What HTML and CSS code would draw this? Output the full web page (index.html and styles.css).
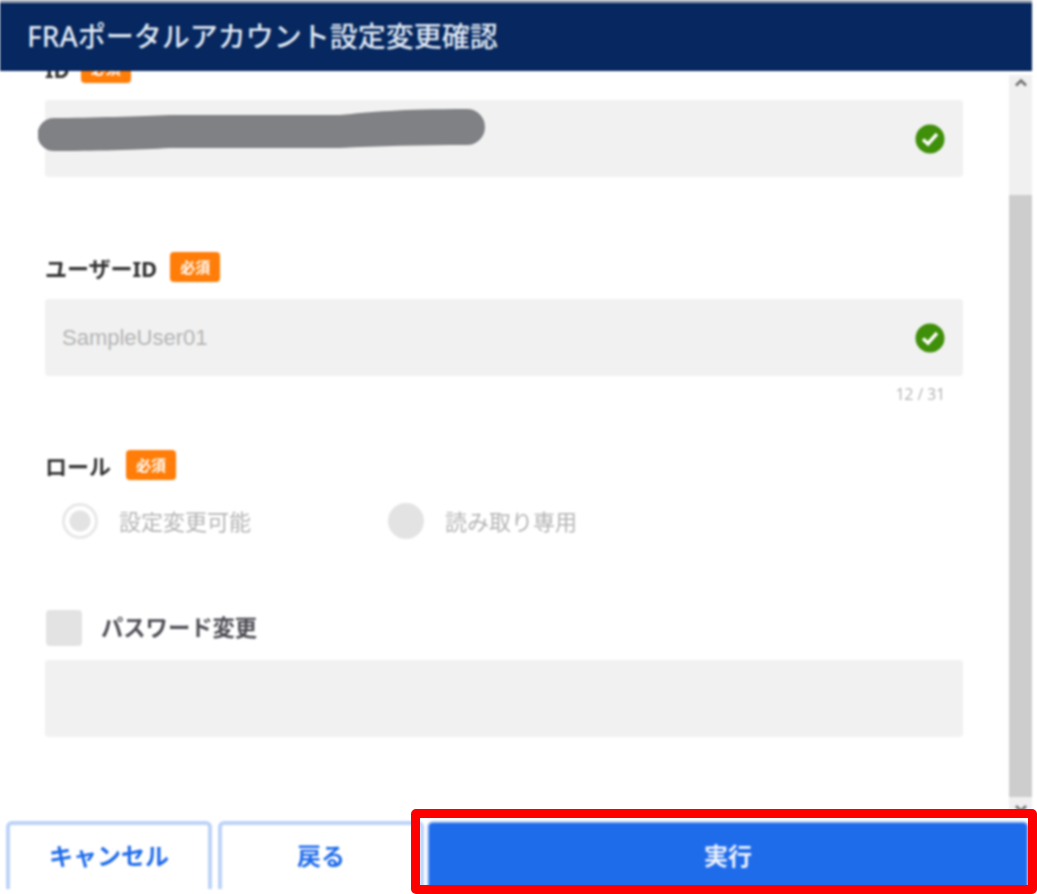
FILE: index.html
```html
<!DOCTYPE html>
<html lang="ja">

<head>
    <meta charset="UTF-8">
    <title>FRAポータルアカウント設定変更確認</title>
    <link rel="stylesheet" href="styles.css">
</head>

<body>
    <div class="dialog">
        <div class="strip"></div>
        <div class="title">FRAポータルアカウント設定変更確認</div>

        <div class="content">
            <div class="form">
                <div class="label-row first">
                    <span class="label">ID</span>
                    <span class="badge">必須</span>
                </div>
                <div class="field">
                    <svg class="redact" width="450" height="44" viewBox="38 108 450 44">
                        <path d="M54 118 C90 118 140 116 170 115 L340 115 C370 112 400 109 467 109 A18 18 0 0 1 467 145 C420 145 380 146 340 148 L170 148 C140 150 90 151 54 151 A16.5 16.5 0 0 1 54 118 Z" />
                    </svg>
                    <svg class="ok" width="30" height="30" viewBox="0 0 30 30">
                        <circle cx="15" cy="15" r="14.5" />
                        <path d="M8 15.5 L13 20 L22 10" />
                    </svg>
                </div>

                <div class="label-row second">
                    <span class="label">ユーザーID</span>
                    <span class="badge">必須</span>
                </div>
                <div class="field">
                    <span class="value">SampleUser01</span>
                    <svg class="ok" width="30" height="30" viewBox="0 0 30 30">
                        <circle cx="15" cy="15" r="14.5" />
                        <path d="M8 15.5 L13 20 L22 10" />
                    </svg>
                </div>
                <div class="counter">12 / 31</div>

                <div class="label-row third">
                    <span class="label">ロール</span>
                    <span class="badge">必須</span>
                </div>
                <div class="radios">
                    <div class="radio-item">
                        <span class="radio checked"></span>
                        <span class="radio-text">設定変更可能</span>
                    </div>
                    <div class="radio-item">
                        <span class="radio"></span>
                        <span class="radio-text">読み取り専用</span>
                    </div>
                </div>

                <div class="check-row">
                    <span class="checkbox"></span>
                    <span class="check-text">パスワード変更</span>
                </div>
                <div class="field pass"></div>
            </div>

            <div class="scrollbar">
                <svg class="arrow" width="14" height="9" viewBox="0 0 14 9">
                    <path d="M2 7.5 L7 2.5 L12 7.5" />
                </svg>
                <div class="thumb"></div>
                <svg class="arrow down" width="14" height="9" viewBox="0 0 14 9">
                    <path d="M2 2 L7 7 L12 2" />
                </svg>
            </div>
        </div>

        <div class="footer">
            <div class="btn cancel">キャンセル</div>
            <div class="btn back">戻る</div>
            <div class="btn run">実行</div>
        </div>
    </div>

    <div class="red-frame"></div>
</body>

</html>
```

FILE: styles.css
```css
html,
body {
    margin: 0;
    padding: 0;
    background: #fff;
}

body {
    width: 1037px;
    height: 894px;
    overflow: hidden;
    position: relative;
    font-family: "Noto Sans", "Noto Sans CJK JP", sans-serif;
}

.dialog {
    width: 1032px;
    filter: blur(.8px);
}

.strip {
    height: 3px;
    background: #98a2b0;
}

.title {
    height: 68px;
    padding-left: 27px;
    background: #06275f;
    color: #dfe7f3;
    font-size: 28px;
    font-weight: 500;
    line-height: 66px;
    white-space: nowrap;
}

.content {
    display: flex;
    height: 750px;
    overflow: hidden;
}

.form {
    width: 918px;
    padding-left: 45px;
}

.label-row {
    display: flex;
    align-items: center;
    gap: 14px;
    height: 30px;
}

.label-row.first {
    margin-top: -18px;
    gap: 11px;
}

.label-row.second {
    margin-top: 75px;
    gap: 13px;
}

.label-row.third {
    margin-top: 46px;
    gap: 15px;
}

.label {
    position: relative;
    top: 1px;
    color: #333;
    font-size: 22px;
    font-weight: 700;
    line-height: 30px;
}

.badge {
    width: 50px;
    height: 30px;
    border-radius: 4px;
    background: #ff7d08;
    color: #fff;
    font-size: 15px;
    font-weight: 700;
    line-height: 30px;
    text-align: center;
}

.field {
    display: flex;
    align-items: center;
    justify-content: space-between;
    position: relative;
    height: 77px;
    margin-top: 17px;
    padding: 0 18px 0 17px;
    border-radius: 4px;
    background: #f1f1f1;
}

.field.pass {
    margin-top: 14px;
}

.redact {
    position: absolute;
    left: -7px;
    top: 8px;
}

.redact path {
    fill: #808184;
}

.ok {
    margin-left: auto;
}

.ok circle {
    fill: #3f8f0a;
}

.ok path {
    fill: none;
    stroke: #fff;
    stroke-width: 3.4;
}

.value {
    color: #b4b4b4;
    font-family: "Liberation Sans", sans-serif;
    font-size: 22px;
}

.counter {
    height: 20px;
    margin-top: 8px;
    padding-right: 18px;
    color: #b4b4b4;
    font-size: 15.5px;
    line-height: 20px;
    text-align: right;
}

.radios {
    display: flex;
    height: 36px;
    margin-top: 23px;
    padding-left: 17px;
}

.radio-item {
    display: flex;
    align-items: center;
    gap: 21px;
    width: 326px;
    color: #b4b4b4;
    font-size: 22px;
}

.radio-text {
    margin-top: -3px;
}

.radio {
    width: 36px;
    height: 36px;
    border-radius: 50%;
    background: #e3e3e3;
    box-sizing: border-box;
}

.radio.checked {
    border: 3px solid #e8e8e8;
    background: radial-gradient(circle, #e3e3e3 0, #e3e3e3 10px, #fff 11px);
}

.check-row {
    display: flex;
    align-items: center;
    gap: 19px;
    height: 36px;
    margin: 71px 0 0 1px;
}

.checkbox {
    width: 36px;
    height: 36px;
    border-radius: 4px;
    background: #e3e3e3;
}

.check-text {
    margin-top: -3px;
    color: #4d4d55;
    font-size: 22.3px;
    font-weight: 700;
}

.scrollbar {
    display: flex;
    flex-direction: column;
    align-items: center;
    width: 23px;
    height: 735px;
    margin: 4px 0 0 46px;
    background: #f0f0f0;
}

.arrow {
    flex: none;
    height: 9px;
    margin-top: 3px;
}

.arrow path {
    fill: none;
    stroke: #6e6e6e;
    stroke-width: 2.5;
}

.arrow.down {
    margin-top: 7px;
}

.thumb {
    flex: none;
    width: 100%;
    height: 602px;
    margin-top: 108px;
    background: #cdcdcd;
}

.footer {
    display: flex;
    height: 68px;
    margin-left: 6px;
    overflow: hidden;
}

.btn {
    box-sizing: border-box;
    flex: none;
    height: 90px;
    border: 4px solid #bcd3f9;
    border-radius: 6px;
    padding-top: 13px;
    font-size: 24px;
    font-weight: 700;
    line-height: 36px;
    text-align: center;
    color: #1f6ceb;
    background: #fff;
}

.cancel {
    width: 206px;
}

.back {
    width: 206px;
    margin-left: 6px;
}

.run {
    width: 602px;
    margin-left: 3px;
    border-color: #a9c6f6;
    border-width: 2px;
    padding-top: 15px;
    background: #1f6ceb;
    color: #eef3fd;
}

.red-frame {
    position: absolute;
    left: 411px;
    top: 809px;
    width: 626px;
    height: 85px;
    box-sizing: border-box;
    border: 9px solid #ff0000;
    border-radius: 5px;
}
```
